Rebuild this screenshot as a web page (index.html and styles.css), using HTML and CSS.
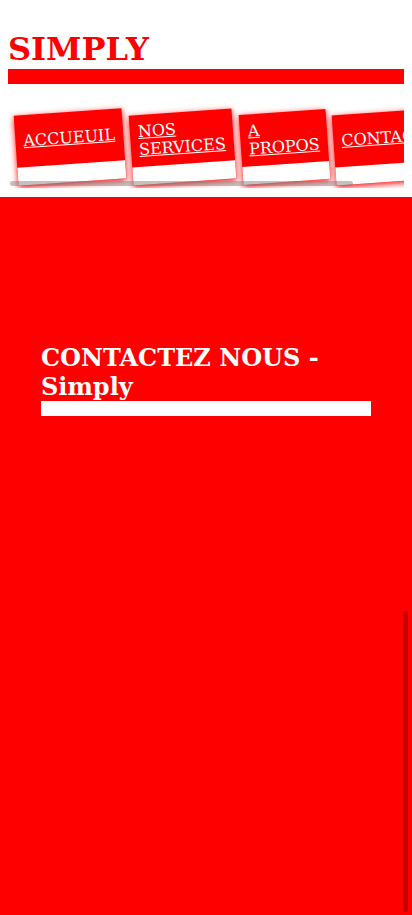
FILE: index.html
```
<!DOCTYPE html>
<html lang="fr">
<head>
<meta charset="utf-8">
<title>Simply - Contact</title>
<link rel="stylesheet" href="styles.css">
</head>
<body>
<header class="site-header">
  <h1 class="brand">SIMPLY</h1>
  <div class="brand-bar"></div>
  <nav class="menu">
    <ul class="menu-list">
      <li class="tile"><a href="#">ACCUEUIL</a></li>
      <li class="tile"><a href="#">NOS SERVICES</a></li>
      <li class="tile"><a href="#">A PROPOS</a></li>
      <li class="tile"><a href="#">CONTACT</a></li>
    </ul>
    <div class="hscroll-thumb"></div>
  </nav>
</header>
<main class="contact">
  <h2 class="contact-title">CONTACTEZ NOUS - Simply</h2>
  <div class="contact-bar"></div>
  <div class="vscroll-thumb"></div>
</main>
</body>
</html>
```
FILE: styles.css
```
html, body {
  margin: 0;
  padding: 0;
  background: #fff;
  font-family: "DejaVu Serif", serif;
}

.site-header {
  padding: 0 8px;
}

.brand {
  margin: 31px 0 0;
  font-size: 32px;
  line-height: 37px;
  font-weight: bold;
  color: #f00;
}

.brand-bar {
  margin-top: 1px;
  height: 15px;
  background: #f00;
}

.menu {
  position: relative;
  overflow: hidden;
  height: 104px;
  margin-bottom: 9px;
}

.menu-list {
  list-style: none;
  margin: 0;
  padding: 28px 0 0 8px;
  display: flex;
  gap: 7px;
  align-items: stretch;
}

.tile {
  flex-shrink: 0;
  width: min-content;
  display: flex;
  align-items: center;
  padding: 6px 8px;
  min-height: 40px;
  background: #f00;
  border-bottom: 18px solid #fff;
  box-shadow: 0 2px 6px #f00;
  transform: rotate(-4deg);
}

.tile a {
  color: #fff;
  font-size: 16px;
  line-height: 18px;
  text-decoration: underline;
}

.hscroll-thumb {
  position: absolute;
  left: 2px;
  bottom: 2px;
  width: 343px;
  height: 5px;
  border-radius: 3px;
  background: rgba(120, 120, 120, 0.45);
}

.contact {
  position: relative;
  background: #f00;
  min-height: 718px;
  padding: 146px 41px 0;
  box-sizing: border-box;
}

.contact-title {
  margin: 0;
  color: #fff;
  font-size: 24px;
  line-height: 29px;
  font-weight: bold;
}

.contact-bar {
  height: 15px;
  background: #fff;
}

.vscroll-thumb {
  position: absolute;
  right: 4px;
  top: 414px;
  bottom: 3px;
  width: 5px;
  border-radius: 3px;
  background: #c40000;
}
```
